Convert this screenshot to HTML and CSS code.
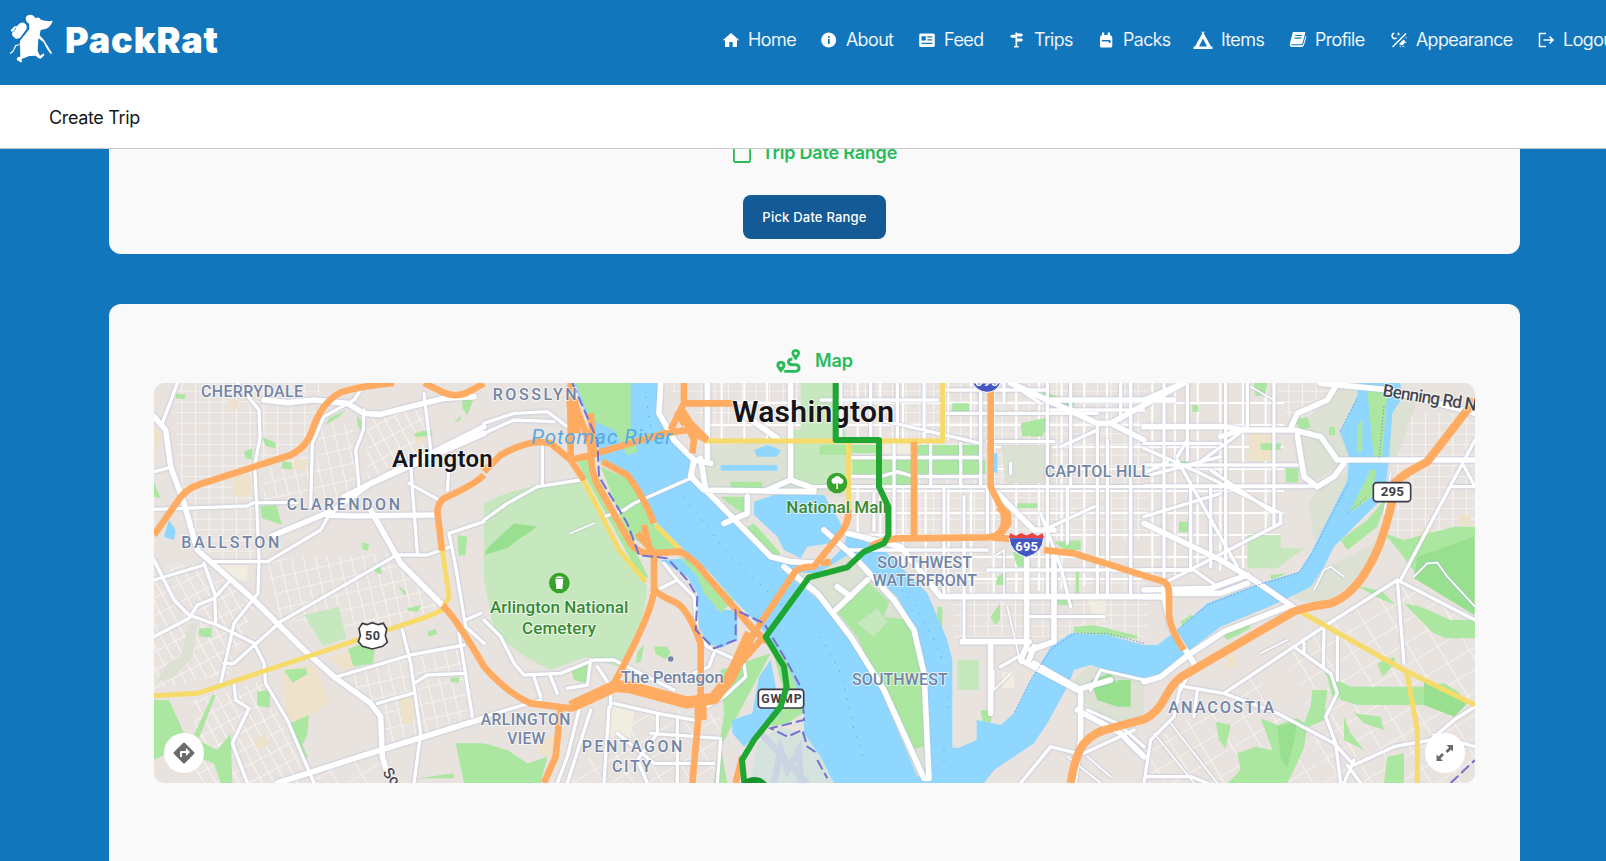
FILE: index.html
```html
<!DOCTYPE html>
<html lang="en">
<head>
<meta charset="utf-8">
<title>PackRat</title>
<link rel="stylesheet" href="styles.css">
</head>
<body>
<header class="header">
  <div class="brand">
    <svg class="brand-logo" viewBox="24 40 141 156"><path d="M77 57Q78 45 91 45Q102 46 106 56Q116 50 123 60Q140 66 158 63Q155 78 139 87L122 91Q120 98 119 107L132 121L148 147L156 160L153 164L143 151L130 127L115 116L113 154L120 168L131 161L133 167L122 177L115 175L107 168L88 169L65 178L66 187L61 188L50 180L53 172L61 171L60 136L49 139L39 158L30 163L29 160L38 153L46 136L59 134L61 122L88 88L87 72Q78 67 77 57Z"/><path d="M32 91L44 80L52 79Q60 67 71 69Q82 74 80 87L60 115L48 118L36 107L37 100Z"/><path class="brand-cut" d="M35 98Q44 98 48 83M61 119Q77 98 85 88"/></svg>
    <span class="brand-name">PackRat</span>
  </div>
  <nav class="nav">
    <a class="nav-item"><svg viewBox="0 0 18 18"><path d="M9 2L.7 9.3H3V16H7.300V11H10.700V16H15V9.300H17.300Z"/></svg>Home</a>
    <a class="nav-item"><svg viewBox="0 0 18 18"><circle cx="8.700" cy="9" r="7.500"/><path class="cut" d="M8 5h1.700v1.800H8zM8 8h1.700v5H8z"/></svg>About</a>
    <a class="nav-item"><svg viewBox="0 0 18 18"><rect x="1.200" y="2.500" width="15.600" height="13.500" rx="1.600"/><path class="cut" d="M3.500 5.200h4.300v4.300H3.500zM9.300 5.200h5v1.300h-5zM9.300 8.200h5v1.300h-5zM3.500 11.700h10.800V13H3.500z"/></svg>Feed</a>
    <a class="nav-item"><svg viewBox="0 0 18 18"><path d="M7.500 1.500h1.700v1h4.500L15 4l-1.300 1.500H9.200V7.500h4.500L15 9l-1.300 1.500H9.200V15h1.500v1.500H6V15h1.500V6.800H3.800L2 5.300l1.800-1.500h3.700z"/></svg>Trips</a>
    <a class="nav-item"><svg viewBox="0 0 18 18"><path d="M5 1.500h2.200V4h3.600V1.500H13V4q2 .7 2.300 3v8q0 1.500-1.500 1.500h-9.300Q3 16.500 3 15V7q0-2.300 2-3z"/><path class="cut" d="M4.800 9h8.700v3h-1.500v-1.600H4.800z"/></svg>Packs</a>
    <a class="nav-item nav-item-tent"><svg viewBox="0 0 20 18"><path d="M9 .3L10 2 11 .3l.7.500-.9 1.700L18 15.500h1.500V18H.5v-2.500H2L9.200 2.500 8.300.8zM10 7.500L6 15.500h8z" fill-rule="evenodd"/></svg>Items</a>
    <a class="nav-item"><svg viewBox="0 0 18 18"><path d="M5 1h10.500q1 0 .7 1.200L13.600 12q-.4 1.300-1.600 1.300H3q-1 .2-1 1h10.500q1.600-.3 2-1.800L16.600 5q1 .2.700 1.300L15 14q-.5 2-2.500 2H3q-2.600-.3-2.200-3L3.500 2.300Q3.900 1 5 1z"/><path class="cut" d="M6.300 4h7l-.3 1.100H6zM5.600 6.600h7l-.3 1.100h-7z"/></svg>Profile</a>
    <a class="nav-item"><svg viewBox="0 0 18 18"><path class="line" d="M2.500 16L16 2.500M4.200 2Q1 3.500 2.500 6.500q1.500 2 4 .5"/><path d="M9 13q3 2.500 5.500-.5Q16 10 13.500 8.500zM8.500 1l.7 1.500 1.500.5-1.500.600-.7 1.500-.6-1.500L6.400 3l1.500-.5zM9.500 14.500l1.200.2-.5 2zM13 14.500l1.800 1.700-2.800-.7zM15.500 10.500l1.500.8-1.800.8zM15.300 6.500l1.500-.5-.7 1.800z"/></svg>Appearance</a>
    <a class="nav-item"><svg viewBox="0 0 18 18"><path class="line" d="M9 2.500H2.500v13H9M6.500 9H16M12.500 5.500L16 9l-3.500 3.500"/></svg>Logout</a>
  </nav>
</header>
<div class="titlebar">Create Trip</div>
<main class="content">
  <section class="card card-date">
    <h2 class="card-title"><svg class="calendar" viewBox="0 0 20 22"><rect x="1.900" y="3" width="16.200" height="17" rx="1.200"/><path d="M6 0v4M14 0v4"/></svg>Trip Date Range</h2>
    <button class="pick">Pick Date Range</button>
  </section>
  <section class="card card-map">
    <h2 class="card-title map-title"><svg class="route-icon" viewBox="107 55 76 77"><path fill-rule="evenodd" d="M167 57q13 1 13 13-1 7-13 22-12-14-13-22 0-12 13-13zm0 8a5 5 0 1 0 .1 0zM122 93q14 1 14 14-1 7-14 22-13-15-14-22 0-13 14-14zm0 9a5 5 0 1 0 .1 0z"/><path class="track" d="M157 88q-12-1-12 8t11 9h12q9 1 9 10t-9 10h-36"/></svg>Map</h2>
    <div class="map">
      <svg class="map-canvas" viewBox="0 9 3963 1200">
        <defs>
          <pattern id="gridN" width="41" height="32" patternUnits="userSpaceOnUse"><path d="M0 0H41M0 0V32"/></pattern>
          <pattern id="gridT" width="35" height="47" patternUnits="userSpaceOnUse" patternTransform="rotate(-13)"><path d="M0 0H35M0 0V47"/></pattern>
          <pattern id="gridS" width="48" height="31" patternUnits="userSpaceOnUse" patternTransform="rotate(62)"><path d="M0 0H48M0 0V31"/></pattern>
          <pattern id="gridL" width="76" height="58" patternUnits="userSpaceOnUse" patternTransform="rotate(-31)"><path d="M0 0H76M0 0V58"/></pattern>
          <pattern id="gridC" width="68" height="66" patternUnits="userSpaceOnUse"><path class="block" d="M0 1H68M1 0V66"/></pattern>
        </defs>
        <rect class="land" y="9" width="3963" height="1200"/>
        <g class="streets">
          <path fill="url(#gridN)" d="M50 9H500L470 190 400 230 310 265V540H160L90 380Z"/>
          <path fill="url(#gridT)" d="M330 540L720 520 860 680 700 750 380 720Z M500 120L600 130 610 320 520 390 480 320Z M560 880L930 790 970 1020 700 1100 660 980Z M330 270L470 220 490 340 330 360Z"/>
          <path fill="url(#gridS)" d="M0 560L150 550 300 670 230 880 0 930Z M120 960L330 900 460 1209H130Z M640 100L830 70 820 200 640 300Z"/>
          <path fill="url(#gridL)" d="M470 1170L690 1100 680 1209H480Z M1440 980L1700 1000 1680 1209H1230Z M2970 1100L3300 880 3520 1209H2970Z M3400 780L3760 600 3963 730V1209H3520Z"/>
          <path fill="url(#gridN)" d="M1530 9H2980V480H2200V130H1660Z M2400 560H2980V770H2400Z M3360 9H3550L3510 110H3400Z M3740 100H3963V500L3700 480Z"/>
          <path fill="url(#gridC)" d="M1660 9H2500V180H1660Z M2080 320H2640V640H2360L2080 450Z M2500 9H3390V450L3300 560 2500 650Z"/>
        </g>
        <g class="beige">
          <path d="M0 145l22 20-4 30-18 8zM225 60h27v28h-27zM238 285l52 0v65h-50zM420 238h38v30h-38zM388 870l90-17 50 112-90 60-40-5zM520 830l90-18-8 45-30 15zM735 955h42v75l-30 5zM300 1080l35-18 12 30-40 16zM3285 160h68v82h-68zM3215 820h28v45h-28zM3790 465l20-22h30l-10 30zM785 165h30v25h-30zM3910 405l40 0v30h-30zM1140 1080l60-10v60h-30z"/>
          <path class="cream" d="M190 555h90v48l-30-5zM1360 975l80 20-10 80-65-10zM2190 190h95v30h-95zM2800 650h55v80l-40-20zM2545 875h35v50h-35z"/>
        </g>
        <g class="pale">
          <path d="M450 705l105-25 22 95-70 23zM990 370Q1100 310 1280 305L1350 430 1480 620Q1470 760 1390 860L1300 830 1190 870Q1080 820 1020 750L990 600Z"/>
          <path class="olive" d="M105 730h25l-15 100-60 65-50 10 40-60 35-15zM1650 200l230-20H2080V350L1840 345 1660 325ZM1700 350h85v80l-50-20zM2540 195h155v115h-140zM3550 20H3630L3560 150 3590 240 3470 310 3430 150ZM3490 330L3590 270 3540 400 3480 490 3465 370ZM3410 650L3540 550 3670 490 3610 600 3500 680ZM3740 20L3790 60 3730 230 3680 230ZM2740 920L2800 860 2970 890V1020L2860 1030Z"/>
          <path d="M3280 465h100v40h70l-80 60h-90zM2410 840h65v90h-65zM1915 150h160v165h-160zM1940 9h110v150h-110z"/>
        </g>
        <g class="park">
          <path d="M65 40l30 4-4 14-25-3zM325 170l42 20-5 15-28-8zM270 215l25-10v35l-20-5zM385 243l28 5v20l-30-2zM318 378l50-3 16 60-60-20zM525 115l50-25-20 20-40 25zM610 105l12 20-2 25-10-15zM925 60l35-5-20 50-15-20zM900 130l20-25v15zM780 160l50-12 5 20-50 2zM135 745h38v28l-38-5zM310 935l38-5v53l-38-5zM390 870l65-5 5 18-45 25zM582 808l30-13 50 15-5 40-58 10zM910 465l30 5-6 55-20 2zM760 685l42-10-10 20-30-2zM730 615l25 20v15zM820 755l25-8 5 15-25 8zM625 487l20 5-3 20-17-5zM660 560l20 2 4 20-20-4zM0 305l20 50-20-5zM175 945l10 0-50 130-15-10zM0 960H45L90 1060 190 1110 230 1060 235 1209H200L180 1150 60 1110 0 1140ZM410 1030l55-25-5 60-15 30 18 40-15 0zM905 1090l85 0V1209H930zM890 893h25v14h-25zM790 1195l110-15v15z"/>
          <path d="M990 1090l70 20 60 40 60-20-20 79H990ZM1270 245l35-10 180 360-30-10ZM1340 260L1430 300 1500 430 1570 510 1500 520 1420 460ZM1260 10H1430L1440 200 1400 140 1320 130ZM1700 870L1850 820 1700 1100 1720 1209H1680L1710 1000ZM1500 800l40 0 10 20-15 18-30-15zM1250 860l50-10v60l-40-10zM1450 815l20-20-10 50-15 5zM1850 790L1920 870 1960 990 1900 1030 1850 1040 1890 940ZM1730 305h95v18h-95zM1700 350h80l-10 50-20-10zM1780 440l20-10 80 90-15 10-80-70z"/>
          <path d="M2000 195h100l-10 30h-95zM2095 240h400v42h-400zM2095 195h80v25h-80zM2285 195h200v30h-200zM2170 285l120 0v35h-120zM2395 70h50v25h-50zM2600 130l90-20-25 60-60-2zM2590 370h60v15h-60zM2700 485l80-5v30l-50 0zM2575 515l50 10v35l-35 0zM2530 590l25-15v40l-30 0zM2510 710l28-40v50l-15 15zM2765 570h10v70h-10zM2480 990h35l-5 38-25-5zM2760 740l60-5 130 32v10l-190-20zM2350 680l15 0v65l-15-15zM2710 660h45v15h-45zM2665 35l100 30-10 20-90-30z"/>
          <path d="M3300 9h40l-5 35-30 5zM3395 265h38v42h-38zM3040 243h60v16h-60zM3075 425h27v32h-27zM3115 75h18v20h-18zM3420 120l40-10 10 30-30 10zM3525 140h18v25h-18zM3320 190h60v20h-60zM3200 760l80-35 10 20-70 35zM3080 725l30-20 20 5-40 40zM3185 1025l45 10-15 70-20-25zM3320 1015l50 20 60-20 30 20-10 70-50 105h-180l40-40-10-50 55-20 50 10zM3475 930l45 0-10 90-45 20-15-10 20-50zM3530 890l60 30h220l60-10 50 30-70 35h-240l-50-15zM3520 890l-10-20 60 60-30 40zM3600 1000l80 10 10 40-60-20zM3570 1010l20 50 40 50-60-30zM3700 1130l50-10v89h-60zM3670 850l50-20 5 20-40 40zM3750 670l50 10 90 40 73 0v55l-90 0-40-20zM3690 460l60 20 150-40 63 0V700L3800 600 3740 520zM3605 615l80 20 40 40-50-20zM3500 480l30-10-30 60zM3400 580l60-25-110 45v-15zM3560 480l80-60 60-70-30 90-90 70z"/>
          <path class="deep" d="M3370 1040l60-15-10 60-20 80-20-30zM1000 505l80-75 70 10-60 40-30 25-70 20zM3790 530l170-60V705l-130-80-50-30zM3810 900l140 60-50 50-90-35zM2810 900l60-20 20 30v70l-60-20zM2890 900h40v80h-40z"/>
        </g>
        <g class="water">
          <path d="M1260 9H1515L1512 110 1560 180 1610 240 1600 290 1650 340 1720 400 1850 530 1890 545 2010 560 2070 500 2080 460 2190 510 2250 570 2320 640 2380 780 2395 840V1103H2415L2468 1080V1020L2540 1035 2580 1000 2630 900 2690 800 2750 760 2860 765 2970 795H3010L3070 750 3160 670 3320 610 3435 575 3470 520 3530 400 3580 300 3585 230 3558 155 3610 50 3615 9H3740L3740 60 3715 100 3705 240 3690 350 3620 420 3540 500 3510 560 3470 620 3370 670 3200 740 3080 830 3020 885 2970 893 2880 880 2810 855 2760 870 2740 920 2680 1030 2640 1090 2520 1170 2490 1209H2040L1990 1130 1950 1090V980L1900 850 1820 740 1740 660 1660 570 1590 510 1510 430 1430 280 1340 250 1335 210Z"/>
          <path d="M1800 365L1860 345H2010L2060 430 2070 460 2030 490 1960 500 1940 535 1890 510 1870 470 1800 405ZM1520 540L1600 535 1640 590 1690 690H1750V780L1700 805 1660 790 1635 740 1630 640 1600 590ZM1850 840L1815 890 1795 1000 1735 1020V1060L1770 1100 1830 1040 1880 1000ZM1700 255h170v17h-170zM1800 210l40-15 40 15-10 20h-60zM2515 220l15 0v60l-15-5zM45 420l20 30-5 30-30-10z"/>
        </g>
        <g>
          <path class="parkfill" d="M1265 9H1430V140L1450 215 1420 225 1380 150 1310 120ZM1570 525L1660 580 1740 660 1700 698 1650 640 1630 590ZM3640 30L3700 40 3685 230 3660 240ZM3613 130l12-10v90l-15 10zM3650 270h15l-10 80-70 50z"/>
          <path class="olivefill" d="M1890 575L1990 580 2090 520 2230 650 2290 760 2315 880 2325 1190 2290 1190 2180 930 2100 780 2030 690Z"/>
          <path class="parkfill" d="M2045 690L2135 600 2205 665 2190 710 2270 720 2305 880 2310 1100 2270 1110 2180 920 2110 770Z"/>
          <path class="palefill" d="M2110 730l60-45 30 40-40 45z"/>
          <path class="tarmac" d="M1810 1090L1880 1040 1950 1060 2000 1130 2040 1209H1790Z"/>
          <path class="runway" d="M1860 1209L1880 1110 1900 1170 1935 1110 1940 1209M1820 1060L1960 1209"/>
          <path class="ferry" d="M2245 630L2280 670 2340 780 2370 850M2000 770L2065 890 2100 1050 2130 1140M2380 950V1010M2370 1110V1170M1475 50L1495 170M1590 350L1720 520 1900 690"/>
        </g>
        <g class="roads">
          <path class="r3" d="M0 110L35 150 50 260 90 370 130 510 300 660 450 810 540 890 650 970 680 1010 685 1130 700 1180M330 60L400 68 480 60 580 70 630 100 680 103 870 55 960 50M520 405L590 408 845 405M350 470L540 390 650 310 990 160M570 350L990 140M650 390L740 550 870 680M370 1209L680 1110 990 1015"/>
          <path class="r2" d="M70 9L25 130M250 10L315 90 318 170 302 260 308 370 315 540 312 640 240 730 200 910M0 388L280 378 300 368 430 368M0 275L50 262M0 600L150 555M0 540L60 660 105 705 190 735 300 790 330 850 335 910 400 1020 480 1209M0 770L105 715 130 675 180 655 230 600M150 550L182 640 185 725M170 545H340L500 450 530 395M380 725L720 530M380 725L240 850H210M240 910L245 960 285 985 235 1090 280 1209M470 380L475 190 510 110 600 60 620 30M630 90L628 150 605 210 615 320M810 40L830 210M770 260L790 520M765 310L855 360M885 260L880 330M885 460L990 425M885 460L905 560 935 740 990 790M720 525H820L890 500M745 750L770 850 800 1060 780 1209M550 890L770 825 930 795M780 910L820 885 935 880M670 970L775 940M935 720L980 700M915 760L955 1010"/>
          <path class="r2" d="M990 130L1080 100 1180 95 1240 140M990 160L1080 120 1200 125M990 420L1060 370 1150 320 1280 300M1165 190V310M1350 410L1410 390 1440 370 1620 290M990 720L1040 770 1080 850 1110 885 1220 880 1320 840 1380 840 1440 870 1560 930M1310 840L1300 915 1240 925M1330 860L1370 920V980M1190 890L1210 940M1140 890L1160 950M990 1010L1160 960M1490 640L1570 600 1530 550M1570 600L1620 650 1630 760 1660 800 1770 850 1775 890 1710 950 1660 980M1680 820L1665 860 1620 880M1380 970L1510 1000 1620 1020M1510 1000V1060L1450 1140 1480 1209M1390 1060L1500 1150 1680 1150M1570 1020V1209M1490 1060L1700 1075 1690 1209M1365 980L1350 1209M1275 990L1240 1130 1210 1209M1310 990L1240 1209"/>
          <path class="r3" d="M1520 9L1515 100 1560 180 1620 240 1610 290 1650 330 1980 335M1640 235L1655 330 1850 530 1910 545 1990 550M1660 9V240M1910 9V300L1840 330M1910 300L1980 325M1620 240L1670 250M1890 560L1990 640 2090 770 2190 930 2310 1195H2325L2310 880 2280 750 2220 660 2100 530 2010 450M2045 690L2140 600M2050 620L2090 650M1750 90L1870 175M1780 350V400L1710 430"/>
          <path class="r2" d="M2080 233H2480M2080 290H2180L2230 275 2280 290 2480 290M1980 320H3460M2180 120L2480 190M2310 9V190M2370 9V185M2060 9V180M2150 9V180M2230 9V180M2000 60H2350M2370 30H2680M2370 100H2830M2480 10V320M2550 9V70M2500 185H2700M2330 190V320M2420 190V320M2220 190V470M2370 320V640M2430 350V780M2080 510H2400M2350 510H2500M2160 340V450M2500 320V460M2570 9L2660 70"/>
          <path class="r3" d="M2530 340L2640 450 2700 450M2570 9L2830 130H2870L2970 180M2690 60H3060M2870 130L2970 75 3090 9M2080 460L2240 500 2360 650H3030M2618 530V800L2600 840 2770 930 2800 920 2870 900M2640 800L2625 840M2640 850L2780 930V1080L2760 1209M2770 990L2900 1060 2970 1130M2425 785H2625M2510 790V1000M2630 810L2700 785V530"/>
          <path class="r2" d="M2740 320V490M2660 400L2720 560 2750 680M2690 440L2820 380M2680 9V650M2750 9V320M2830 130V650M2900 9V120M2860 180V650M2930 9V650M2690 90H2970M2720 200L2830 150M2500 570H3110M2630 710H2850M2570 250V280M2540 860L2610 820M2840 870L2810 930M2800 990L2890 1030 2970 1100M2790 1120L2940 1050M2770 1120L2690 1100 2600 1209M2840 870L2970 900"/>
          <path class="r3" d="M2970 140H3210L3270 150H3420L3500 170 3550 240H3963M2970 60L3090 9M3200 170L3280 145M2970 430L3200 540 3300 600 3430 690M2970 630L3170 625 3280 585M3490 320L3540 290 3570 250M3430 165L3450 290 3490 320M3500 10L3690 28 3963 100M3410 145L3430 100 3520 60 3550 10M2970 905L3020 890 3110 820 3210 755 3400 680M3030 650L3050 740 3120 850M3030 650H2970M3030 640L3200 640 3280 610"/>
          <path class="r2" d="M2970 190H3200M2970 255H3430M2970 318H3490M2970 205L3130 275 3380 400V430L3030 610M3170 270L3360 400M3070 240L3250 560M3070 230L3100 180M3200 230L2970 290M3040 245L2970 280M3140 245L3270 150M2970 410L3200 340M2970 570H3120L3190 620M3030 9V640M3100 9V240M3215 9V540M3360 9V435M3280 150V9M3110 320V560M3170 320V560M3740 600L3920 260 3963 180M3890 320H3963L3920 240M3730 600L3963 720M3730 600L3510 740 3210 940M3730 600L3750 850M3420 800L3530 880 3550 940 3515 1010 3545 1090 3560 1209M3090 920L3210 940 3370 1000 3540 1090 3600 1155 3720 1100 3830 1080 3900 1020 3963 980M3510 740L3508 860M3550 770V900M3080 915L3060 1010 2990 1080 2970 1209M3120 850L3080 930M3130 930L3120 1010M2980 1190H3110L3160 1209M3570 1209L3600 1140M3580 1155L3620 1209M3450 790V820M3840 1065L3963 1100"/>
          <path class="r1" d="M1250 460L1320 430M3780 590L3820 550 3850 548 3880 590 3963 680M3480 630L3510 570 3530 560 3570 590M3290 20L3360 60M3710 280L3690 400M2520 870V930L2570 880M2740 1130L2840 1209M2800 1130L2870 1190M3000 1060L3120 1209M3050 1030L3190 1209M3320 820L3400 780M2560 680L2600 850M2520 530L2550 510V650"/>
        </g>
        <g class="highways">
          <path class="yellow" d="M865 510L885 650 865 690 820 710 340 870 130 940 0 947M1285 295L1340 400 1395 510 1475 605M1505 435L1580 510M1650 183H2366V9M2084 190V400M3430 690L3750 870 3963 975M3757 870L3790 1050 3790 1209"/>
          <path class="orange" stroke-width="20" d="M0 465L70 365Q95 325 140 312L410 225Q460 200 475 150 500 70 560 37 620 18 720 9M810 9L870 38Q910 55 945 35L990 10M990 285Q960 315 870 355Q845 375 852 410L864 512M866 676Q910 720 990 860Q1060 940 1130 970L1250 985 1380 915 1430 915 1600 965 1660 960Q1710 925 1760 820L1920 580Q1930 560 1980 560L2060 460Q2084 430 2084 390M990 275L1040 225Q1130 175 1190 190L1250 240 1310 225 1530 160 1600 150 1660 180M1250 9V240L1290 300M1255 50L1310 200Q1310 290 1340 330L1430 490Q1450 520 1490 520L1580 515Q1630 545 1660 590L1800 750 1840 785M1310 100L1320 230M1345 245L1420 285Q1470 350 1500 430M1470 435L1490 520M1450 460L1500 520V625Q1510 645 1560 665Q1600 680 1640 790V940L1615 1209M1500 625Q1500 690 1380 910M1220 980L1205 1130 1170 1209M1590 9V70L1550 150M1580 90L1620 180 1615 220M1580 70H1740M1600 120L1660 180M1745 1209L1765 1130M1750 860L1820 780M2280 185V470M2510 30V320L2550 400V430Q2545 470 2500 472L2230 475Q2180 480 2150 500M2000 550L2030 545M2515 472L2620 480M2670 510L2760 520 2980 590 3030 605Q3045 615 3045 640V710Q3050 750 3090 810"/>
          <path class="orange" stroke-width="25" d="M2750 1209Q2765 1120 2790 1090Q2820 1055 2870 1045L2970 1018Q3010 1000 3035 950Q3060 900 3100 880L3410 700Q3430 685 3530 670Q3600 645 3650 550Q3690 480 3720 340M3720 310Q3750 280 3820 245L3963 60M2535 380L2560 405V430L2535 465"/>
          <path class="orange" stroke-width="36" d="M1380 918L1430 922 1600 968 1680 955 1730 890 1790 760M1250 980L1380 920M1640 950V1020M1255 60L1262 160M1575 90L1600 130"/>
        </g>
        <path class="boundary" d="M1255 9L1330 180 1335 290 1420 430 1455 525 1540 535 1600 600 1630 650 1625 750 1680 805 1745 780V690L1830 730 1890 830 1945 930 1950 1020 1850 1045 1900 1070 1945 1050 1960 1100 1990 1120M1990 1140L2020 1195M3890 1209L3963 1140"/>
        <path class="shore" d="M3558 155L3612 50M3585 310L3535 400 3475 520 3435 578 3320 612 3160 675 3070 750M2970 790L2860 760H2760L2690 810 2630 900 2580 1000M3690 80L3675 240M3580 400L3640 350"/>
        <g class="shields">
          <path class="shield50" d="M625 730l14 4 16-6 17 6 16-4 10 17-4 20 6 20-14 12-31 8-30-8-12-14 6-18-4-22z"/><text x="633" y="781" font-size="38" textLength="45">50</text>
          <rect x="1813" y="928" width="136" height="56" rx="10"/><text x="1822" y="970" font-size="37" textLength="121">GWMP</text>
          <rect x="3658" y="308" width="112" height="57" rx="10"/><text x="3680" y="349" font-size="40" textLength="70">295</text>
          <path class="inter" d="M2565 473h104q-3 46-52 59-48-14-52-59M2455 9h85q-13 28-42 28-28-2-43-28z"/><path class="inter-top" d="M2568 460l18 7 15-8 16 7 18-7 15 8 16-7 4 14h-105z"/><text class="light" x="2584" y="513" font-size="39" textLength="68">695</text><text class="light" x="2464" y="19" font-size="35" textLength="68">695</text>
        </g>
        <g class="labels">
          <text x="141" y="50" font-size="48" textLength="306">CHERRYDALE</text>
          <text x="398" y="389" font-size="48" textLength="340">CLARENDON</text>
          <text x="82" y="503" font-size="48" textLength="294">BALLSTON</text>
          <text x="1016" y="59" font-size="48" textLength="252">ROSSLYN</text>
          <text x="980" y="1035" font-size="47" textLength="269">ARLINGTON</text>
          <text x="1060" y="1092" font-size="47" textLength="114">VIEW</text>
          <text x="1283" y="1116" font-size="48" textLength="302">PENTAGON</text>
          <text x="1374" y="1175" font-size="48" textLength="118">CITY</text>
          <text x="1400" y="910" font-size="51" textLength="309">The Pentagon</text>
          <circle cx="1550" cy="837" r="8"/>
          <text x="2170" y="563" font-size="48" textLength="284">SOUTHWEST</text>
          <text x="2156" y="619" font-size="48" textLength="313">WATERFRONT</text>
          <text x="2094" y="914" font-size="48" textLength="287">SOUTHWEST</text>
          <text x="2672" y="292" font-size="48" textLength="316">CAPITOL HILL</text>
          <text x="3043" y="998" font-size="49" textLength="317">ANACOSTIA</text>
          <text class="river" x="1132" y="191" font-size="62" textLength="422">Potomac River</text>
          <text class="poi" x="1008" y="698" font-size="51" textLength="415">Arlington National</text>
          <text class="poi" x="1104" y="762" font-size="51" textLength="222">Cemetery</text>
          <text class="poi" x="1897" y="400" font-size="51" textLength="302">National Mall</text>
          <text class="city" x="714" y="260" font-size="72" textLength="302">Arlington</text>
          <text class="city" x="1734" y="127" font-size="90" textLength="486">Washington</text>
          <text class="street" font-size="52" transform="translate(3684 48) rotate(9)" textLength="285">Benning Rd N</text>
          <text class="street" font-size="46" transform="translate(684 1178) rotate(52)">So</text>
          <g class="pins"><circle cx="1216" cy="609" r="31"/><circle cx="2049" cy="309" r="31"/><path d="M1204 597h24l-3 30h-18zM1202 595q14-13 28 0M2047 308h5v19h-5z"/><path d="M2034 308q-5-12 7-15 11-12 20 2 12 4 5 15l-8 3-5-4-4 4-4-4-4 4z"/></g>
        </g>
        <path class="route" d="M2045 0V180H2175V320L2203 380V465L2190 490 2130 515 2080 562 1965 592 1835 770 1890 860 1898 920 1880 980 1800 1080 1764 1140 1772 1220"/>
        <circle class="route-end" cx="1801" cy="1238" r="47"/>
      </svg>
      <button class="map-btn map-btn-left" aria-label="Directions"><svg viewBox="0 0 40 40"><path class="icon" fill-rule="evenodd" d="M19 10q1-1 2 0l9 9q1 1 0 2l-9 9q-1 1-2 0l-9-9q-1-1 0-2zM16 24h2v-4h4v3l4-4-4-4v3h-5q-1 0-1 1z"/></svg></button>
      <button class="map-btn map-btn-right" aria-label="Fullscreen"><svg viewBox="0 0 40 40"><path class="icon" d="M21.500 12H28v6.500l-2-2-3.500 3.500-2-2L24 14.500zM11.500 21.500l2 2 3.500-3.500 2 2-3.500 3.500 2.500 2.500h-6.500z"/></svg></button>
    </div>
  </section>
</main>
</body>
</html>
```
FILE: styles.css
```css
* { box-sizing: border-box; }
body { margin: 0; height: 861px; overflow: hidden; background: #1276bd; font-family: Inter, "Liberation Sans", sans-serif; display: flex; flex-direction: column; }
.header { height: 85px; flex: none; display: flex; justify-content: space-between; padding-left: 8px; color: #fff; overflow: hidden; }
.brand { display: flex; padding-top: 13px; gap: 10px; }
.brand-logo { width: 47px; height: 52px; fill: #fff; }
.brand-cut { fill: none; stroke: #1276bd; stroke-width: 2; }
.brand-name { font-size: 36px; line-height: 52px; font-weight: 900; padding-top: 1px; letter-spacing: .9px; }
.nav { width: 884px; flex: none; display: grid; grid-template-columns: 98px 98px 90px 89px 98px 94px 101px 147px 90px; height: 79px; align-items: center; }
.nav-item { display: flex; align-items: center; gap: 8px; font-size: 18px; font-weight: 300; letter-spacing: -.5px; white-space: nowrap; -webkit-text-stroke: .2px #fff; }
.nav-item svg { width: 18px; height: 18px; flex: none; fill: #fff; }
.nav-item-tent svg { width: 20px; margin-left: -2px; }
.cut { fill: #1276bd; }
.nav-item .line { fill: none; stroke: #fff; stroke-width: 1.5; }
.titlebar { height: 64px; flex: none; background: #fff; border-bottom: 1px solid #c9c9c9; padding: 0 49px; font-size: 18px; line-height: 65px; letter-spacing: -.35px; color: #17171a; }
.content { flex: 1; min-height: 0; overflow: hidden; padding: 0 86px 0 109px; display: flex; flex-direction: column; gap: 50px; }
.card { background: #f9f9f9; display: flex; flex-direction: column; align-items: center; flex: none; }
.card-date { height: 105px; border-radius: 0 0 12px 12px; }
.card-title { margin: 0; display: flex; align-items: center; font-size: 18px; font-weight: 600; color: #29bb59; line-height: 24px; }
.card-date .card-title { margin-top: -8px; gap: 10px; letter-spacing: -.2px; }
.calendar { width: 20px; height: 22px; fill: none; stroke: #29bb59; stroke-width: 1.8; }
.pick { margin-top: 30px; width: 143px; height: 44px; border: 0; border-radius: 8px; background: #145a96; color: #fff; font: 500 13px Inter, sans-serif; letter-spacing: .2px; flex: none; }
.card-map { height: 600px; border-radius: 12px 12px 0 0; padding-top: 43px; }
.map-title { height: 28px; margin-bottom: 8px; gap: 14px; }
.route-icon { width: 25px; height: 26px; fill: #29bb59; }
.track { fill: none; stroke: #29bb59; stroke-width: 9; }
.map { position: relative; width: 1321px; height: 400px; border-radius: 10px; overflow: hidden; }
.map-canvas { display: block; width: 1321px; height: 400px; font-family: Roboto, "Open Sans", sans-serif; }
.map-btn { position: absolute; bottom: 10px; width: 40px; height: 40px; border: 0; padding: 0; border-radius: 50%; background: #fff; }
.map-btn svg { display: block; width: 40px; height: 40px; }
.map-btn-left { left: 10px; }
.map-btn-right { right: 10px; }
.icon { fill: #6b6b6b; }
.land { fill: #e9e3df; }
pattern path { fill: none; stroke: #f8f6f5; stroke-width: 5; }
pattern .block { stroke: #fff; stroke-width: 10; }
.beige { fill: #eee2cb; }
.cream { fill: #f2ede1; }
.pale, .palefill { fill: #c7e8be; }
.olive, .olivefill { fill: #dce1d4; }
.park, .parkfill { fill: #ace7a1; }
.deep { fill: #98df90; }
.water { fill: #90d7ff; }
.tarmac { fill: #d5e3df; }
.runway { fill: none; stroke: #ccd4e3; stroke-width: 20; }
.ferry { fill: none; stroke: #58a9df; stroke-width: 3; stroke-dasharray: 4 25; }
.roads { fill: none; stroke: #fff; stroke-linejoin: round; stroke-linecap: round; filter: drop-shadow(0 0 3px #a9b5d6); }
.r1 { stroke-width: 5; }
.r2 { stroke-width: 10; }
.r3 { stroke-width: 17; }
.highways { fill: none; stroke-linejoin: round; }
.yellow { stroke: #f6db6b; stroke-width: 15; }
.orange { stroke: #ffab61; }
.boundary { fill: none; stroke: #7470d0; stroke-width: 6; stroke-dasharray: 32 12; }
.shore { fill: none; stroke: #6e8ee6; stroke-width: 3; stroke-dasharray: 4 6; }
.shields { font-weight: 700; fill: #404049; }
.shields rect, .shield50 { fill: #fff; stroke: #3c3c46; stroke-width: 5; }
.shields .inter { fill: #4557c3; stroke: #fff; stroke-width: 3; }
.inter-top { fill: #e94440; }
.shields .light { fill: #fff; }
.labels { fill: #7285a6; font-weight: 500; }
.labels text { paint-order: stroke; stroke: #ffffffb0; stroke-width: 6; stroke-linejoin: round; }
.labels .river { fill: #55a9e0; font-style: italic; font-weight: 400; stroke: none; }
.labels .poi { fill: #378933; }
.labels .city { fill: #15151a; font-weight: 600; }
.labels .street { fill: #47474f; }
.pins { fill: #36a42a; }
.pins path { fill: #fff; }
.route { fill: none; stroke: #20a632; stroke-width: 18; stroke-linejoin: round; }
.route-end { fill: #16932a; }
```
